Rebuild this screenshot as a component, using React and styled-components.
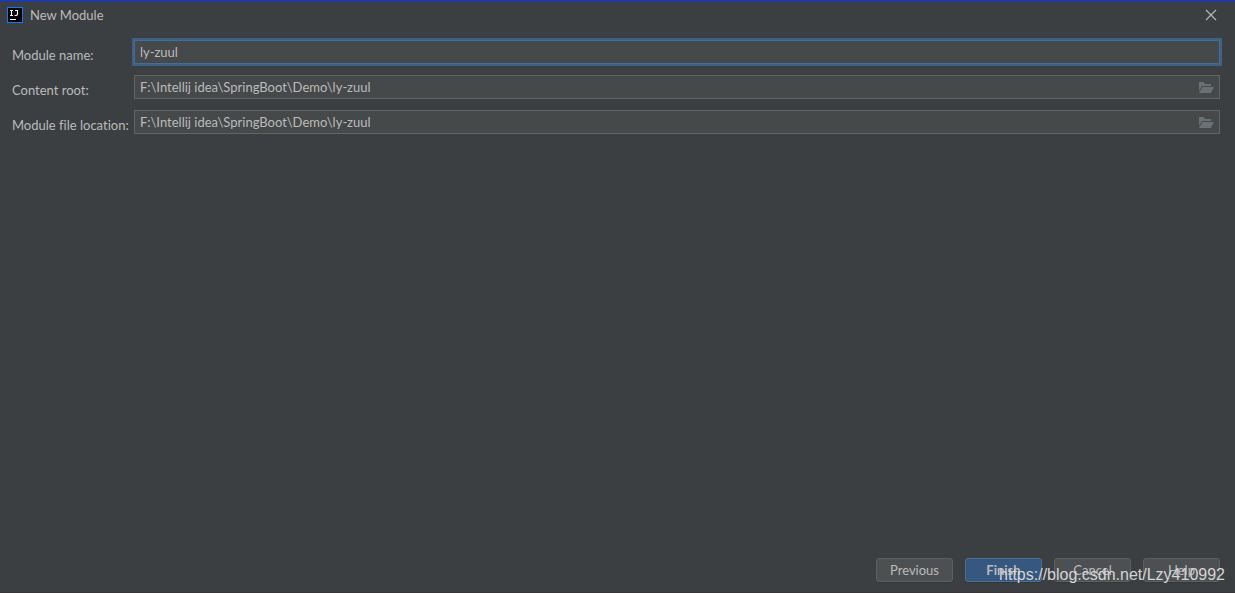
import React, { useState } from "react";
import styled, { createGlobalStyle } from "styled-components";

const GlobalStyle = createGlobalStyle`
  *, *::before, *::after { box-sizing: border-box; }
  body {
    margin: 0;
    background: #3c3f41;
    color: #bbbbbb;
    font: 13px/18px Lato, "Noto Sans", sans-serif;
    font-variant-ligatures: none;
  }
  button, input { font: inherit; color: inherit; font-variant-ligatures: none; }
`;

const Dialog = styled.main`
  position: relative;
  display: flex;
  flex-direction: column;
  min-height: 100vh;
  border-top: 2px solid #2139a4;
  border-bottom: 1px solid #383437;
`;

const TitleBar = styled.header`
  display: flex;
  align-items: center;
  gap: 7px;
  height: 26px;
  padding: 0 18px 0 7px;
`;

const Title = styled.h1`
  flex: 1;
  margin: 0;
  font-size: 13px;
  font-weight: 400;
`;

const CloseButton = styled.button`
  display: flex;
  padding: 0;
  border: 0;
  background: none;
`;

const Form = styled.form`
  display: flex;
  flex: 1;
  flex-direction: column;
`;

const Fields = styled.div`
  display: grid;
  grid-template-columns: 122px 1fr;
  row-gap: 11px;
  padding: 12px 15px 0 12px;
`;

const Label = styled.label`
  align-self: end;
  white-space: nowrap;
`;

const Field = styled.div`
  display: flex;
  align-items: center;
  height: 24px;
  padding: 0 5px;
  border: 1px solid ${(p) => (p.$active ? "#466d94" : "#646464")};
  background: #45494a;
  box-shadow: ${(p) => (p.$active ? "0 0 0 2px #3d6185" : "none")};
`;

const TextInput = styled.input`
  flex: 1;
  min-width: 0;
  height: 18px;
  padding: 0;
  border: 0;
  outline: 0;
  background: none;
`;

const BrowseButton = styled.button`
  display: flex;
  padding: 0;
  border: 0;
  background: none;
`;

const Footer = styled.footer`
  display: flex;
  justify-content: flex-end;
  gap: 12px;
  margin-top: auto;
  padding: 0 15px 10px;
`;

const Button = styled.button`
  width: 77px;
  height: 24px;
  padding: 0;
  border: 1px solid ${(p) => (p.$primary ? "#4c708c" : "#5e6060")};
  border-radius: 3px;
  background: ${(p) => (p.$primary ? "#365880" : "#4c5052")};
  box-shadow: 0 1px 1px #35383a;
  font-weight: ${(p) => (p.$primary ? 700 : 400)};
`;

const Watermark = styled.span`
  position: absolute;
  right: 10px;
  bottom: 8px;
  color: #d4d5d5;
  font: 16px/18px "Liberation Sans", Arial, sans-serif;
  pointer-events: none;
`;

function IdeaLogo() {
  return (
    <svg width="16" height="16" viewBox="0 0 16 16" aria-hidden="true">
      <rect width="16" height="16" fill="#087cfa" />
      <rect x="1" y="1" width="14" height="14" fill="#000" />
      <path
        d="M3 3.5h3M4.5 3.5v5M3 8.5h3M8 3.5h2.5v3.6q0 1.4-1.4 1.4H7.5"
        fill="none"
        stroke="#fff"
        strokeWidth="1.2"
      />
      <path d="M3 12h6v1H3z" fill="#fff" />
    </svg>
  );
}

function CloseIcon() {
  return (
    <svg width="12" height="12" viewBox="0 0 12 12" aria-hidden="true">
      <path d="M1 1l10 10M11 1L1 11" stroke="#b8b9ba" strokeWidth="1.1" />
    </svg>
  );
}

function FolderIcon() {
  return (
    <svg width="16" height="12" viewBox="0 0 16 12" aria-hidden="true">
      <path d="M1 1h4.5L7 3h6v2H4L1 10z" fill="#6a7174" />
      <path d="M4.4 6H16L12.8 12H1z" fill="#6a7174" />
    </svg>
  );
}

function FormField({ id, label, initial, active, browse }) {
  const [value, setValue] = useState(initial);
  return (
    <>
      <Label htmlFor={id}>{label}</Label>
      <Field $active={active}>
        <TextInput id={id} value={value} onChange={(e) => setValue(e.target.value)} />
        {browse && (
          <BrowseButton type="button" aria-label={`Browse ${label}`}>
            <FolderIcon />
          </BrowseButton>
        )}
      </Field>
    </>
  );
}

export default function App() {
  return (
    <>
      <GlobalStyle />
      <Dialog>
        <TitleBar>
          <IdeaLogo />
          <Title>New Module</Title>
          <CloseButton type="button" aria-label="Close">
            <CloseIcon />
          </CloseButton>
        </TitleBar>
        <Form onSubmit={(e) => e.preventDefault()}>
          <Fields>
            <FormField id="name" label="Module name:" initial="ly-zuul" active />
            <FormField
              id="root"
              label="Content root:"
              initial={"F:\\Intellij idea\\SpringBoot\\Demo\\ly-zuul"}
              browse
            />
            <FormField
              id="location"
              label="Module file location:"
              initial={"F:\\Intellij idea\\SpringBoot\\Demo\\ly-zuul"}
              browse
            />
          </Fields>
          <Footer>
            <Button type="button">Previous</Button>
            <Button type="submit" $primary>Finish</Button>
            <Button type="button">Cancel</Button>
            <Button type="button">Help</Button>
          </Footer>
        </Form>
        <Watermark>https://blog.csdn.net/Lzy410992</Watermark>
      </Dialog>
    </>
  );
}
